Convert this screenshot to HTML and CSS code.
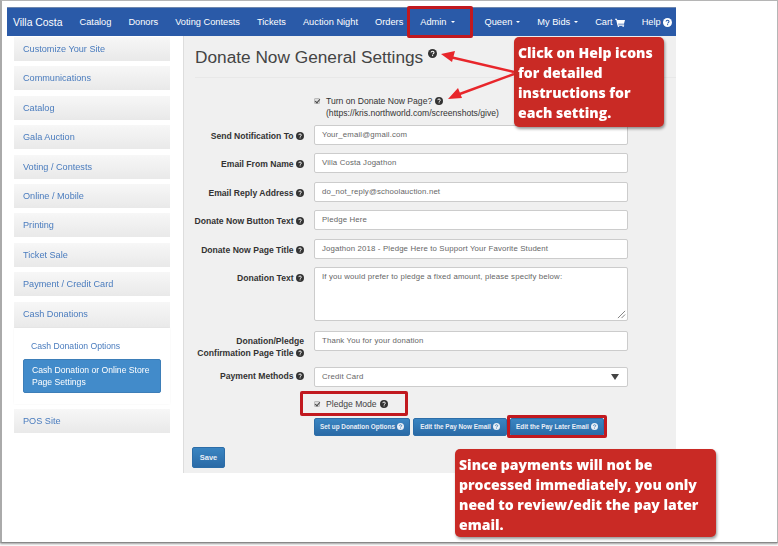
FILE: index.html
```html
<!DOCTYPE html>
<html lang="en">
<head>
<meta charset="utf-8">
<title>Donate Now General Settings</title>
<link rel="stylesheet" href="styles.css">
</head>
<body>
<svg class="defs" width="0" height="0" aria-hidden="true">
  <symbol id="q" viewBox="0 0 16 16">
    <circle cx="8" cy="8" r="8" fill="currentColor"/>
    <path d="M5.4 6.2c.2-1.5 1.3-2.2 2.7-2.2 1.5 0 2.6.9 2.6 2.2 0 1.9-2.4 1.9-2.4 3.5" fill="none" stroke="var(--q,#fff)" stroke-width="1.9"/>
    <rect x="7.2" y="10.8" width="1.9" height="1.9" fill="var(--q,#fff)"/>
  </symbol>
</svg>
<div class="shot">
  <div class="page">
    <nav class="nav">
      <a class="brand">Villa Costa</a>
      <a>Catalog</a><a>Donors</a><a>Voting Contests</a><a>Tickets</a><a>Auction Night</a><a>Orders</a>
      <a class="admin">Admin<i class="caret"></i></a>
      <a>Queen<i class="caret"></i></a>
      <a>My Bids<i class="caret"></i></a>
      <a class="cart">Cart
        <svg class="carticon" viewBox="0 0 16 14"><path d="M0 1h3l.6 2H16l-1.6 6H5l.3 1.3H14.6V12H4L1.9 2.6H0z" fill="#fff"/><circle cx="5.5" cy="13" r="1.2" fill="#fff"/><circle cx="13" cy="13" r="1.2" fill="#fff"/></svg>
      </a>
      <a class="help">Help <svg class="q navq"><use href="#q"/></svg></a>
    </nav>
    <div class="body">
      <aside class="side">
        <div class="item">Customize Your Site</div>
        <div class="item">Communications</div>
        <div class="item">Catalog</div>
        <div class="item">Gala Auction</div>
        <div class="item">Voting / Contests</div>
        <div class="item">Online / Mobile</div>
        <div class="item">Printing</div>
        <div class="item">Ticket Sale</div>
        <div class="item">Payment / Credit Card</div>
        <div class="item open">Cash Donations</div>
        <div class="sub">
          <div class="subitem">Cash Donation Options</div>
          <div class="subitem active">Cash Donation or Online Store Page Settings</div>
        </div>
        <div class="item">POS Site</div>
      </aside>
      <main class="main">
        <h1 class="title">Donate Now General Settings <svg class="q titleq"><use href="#q"/></svg></h1>
        <div class="turnon">
          <span class="check"></span>
          <div>Turn on Donate Now Page? <svg class="q"><use href="#q"/></svg><br>(https://kris.northworld.com/screenshots/give)</div>
        </div>
        <div class="row"><label>Send Notification To <svg class="q"><use href="#q"/></svg></label><div class="field">Your_email@gmail.com</div></div>
        <div class="row"><label>Email From Name <svg class="q"><use href="#q"/></svg></label><div class="field">Villa Costa Jogathon</div></div>
        <div class="row"><label>Email Reply Address <svg class="q"><use href="#q"/></svg></label><div class="field">do_not_reply@schoolauction.net</div></div>
        <div class="row"><label>Donate Now Button Text <svg class="q"><use href="#q"/></svg></label><div class="field">Pledge Here</div></div>
        <div class="row"><label>Donate Now Page Title <svg class="q"><use href="#q"/></svg></label><div class="field">Jogathon 2018 - Pledge Here to Support Your Favorite Student</div></div>
        <div class="row"><label>Donation Text <svg class="q"><use href="#q"/></svg></label><div class="field area">If you would prefer to pledge a fixed amount, please specify below:
          <svg class="grip" viewBox="0 0 10 10"><path d="M9 1 1 9M9 5 5 9" stroke="#777" fill="none"/></svg></div></div>
        <div class="row two"><label>Donation/Pledge<br>Confirmation Page Title <svg class="q"><use href="#q"/></svg></label><div class="field">Thank You for your donation</div></div>
        <div class="row pay"><label>Payment Methods <svg class="q"><use href="#q"/></svg></label><div class="field select">Credit Card<i class="selcaret"></i></div></div>
        <div class="pledge"><span class="check"></span>Pledge Mode <svg class="q"><use href="#q"/></svg></div>
        <div class="btns">
          <span class="btn">Set up Donation Options <svg class="q btnq"><use href="#q"/></svg></span>
          <span class="btn">Edit the Pay Now Email <svg class="q btnq"><use href="#q"/></svg></span>
          <span class="btn">Edit the Pay Later Email <svg class="q btnq"><use href="#q"/></svg></span>
        </div>
        <span class="btn save">Save</span>
      </main>
    </div>
  </div>

  <span class="redbox rb-admin"></span>
  <span class="redbox rb-pledge"></span>
  <span class="redbox rb-later"></span>
  <svg class="arrows" width="778" height="546" viewBox="0 0 778 546">
    <g stroke="#e8262b" stroke-width="2.4" fill="none"><path d="M514 72 450 57"/><path d="M514 74 457 95"/></g>
    <path d="M441 54 455 51 452 62zM448 99 458 88 462 98z" fill="#e8262b"/>
  </svg>
  <div class="callout c1">Click on Help icons<br>for detailed<br>instructions for<br>each setting.</div>
  <div class="callout c2">Since payments will not be<br>processed immediately, you only<br>need to review/edit the pay later<br>email.</div>
</div>
</body>
</html>
```
FILE: styles.css
```css
* { box-sizing: border-box; }
html, body { margin: 0; padding: 0; background: #fff; }
body { font-family: "Liberation Sans", Arial, sans-serif; font-size: 10px; color: #333; }
.defs { position: absolute; }
.shot { position: relative; width: 778px; height: 546px; overflow: hidden; }
.shot::before { content: ""; position: absolute; inset: 0 0 3px 0; border: 1px solid #b5b5b5; border-left: 2px solid #aaa; border-bottom-color: #888; box-shadow: 0 1px 2px rgba(0,0,0,.4); pointer-events: none; }
.page { position: absolute; inset: 7px auto auto 7px; width: 669px; filter: blur(.35px); }

.nav { display: flex; align-items: center; height: 29px; background: #2a5aa8; color: #fff; padding-left: 6px; border-top: 1px solid #6f87ad; white-space: nowrap; }
.nav a { margin-right: 17px; font-size: 9.25px; }
.nav .brand { font-size: 10.4px; }
.nav .admin { margin-right: 30px; }
.nav .cart, .nav .help { display: flex; align-items: center; gap: 2px; }
.nav .help { margin-right: 0; }
.caret { display: inline-block; margin-left: 4px; vertical-align: 2px; border: 2.5px solid transparent; border-top-color: #fff; border-bottom: 0; }
.carticon { width: 10px; height: 9px; }
.q { display: inline-block; width: 8px; height: 8px; color: #333; vertical-align: -1px; }
.navq { color: #fff; --q: #2a5aa8; width: 9px; height: 9px; }
.titleq { width: 9px; height: 9px; vertical-align: 5px; }

.body { display: flex; align-items: flex-start; }
.side { width: 156px; margin-left: 7px; padding-top: 1px; display: flex; flex-direction: column; gap: 5.4px; color: #4a7cbe; }
.item { height: 24px; padding: 0 9px; line-height: 24px; background: linear-gradient(#f7f7f7, #e9e9e9); font-size: 9.15px; }
.item.open { height: 26px; margin-bottom: -5.4px; }
.sub { height: 76px; padding: 12px 9px 0; background: #fff; box-shadow: 0 0 2px rgba(0,0,0,.05); }
.subitem { font-size: 8.65px; padding-left: 8px; line-height: 12px; }
.subitem.active { margin-top: 7px; height: 34px; padding: 4px 2px 4px 8px; line-height: 12px; color: #fff; background: #428bca; border: 1px solid #3d7eb8; border-radius: 2px; }

.main { width: 493px; height: 437px; margin-left: 13px; padding: 0 0 0 1px; background: #f0f0f0; border-left: 1px solid #ddd; position: relative; }
.title { margin: 0 0 0 10px; height: 42px; padding-top: 11px; font-size: 17.25px; line-height: 21px; font-weight: 400; color: #444; border-bottom: 1px solid #e8e8e8; white-space: nowrap; }
.turnon { display: flex; gap: 5px; margin: 17px 0 0 129px; font-size: 8.6px; line-height: 12px; height: 30px; }
.turnon > div { margin-left: 1px; }
.check { display: inline-block; flex: none; position: relative; width: 6px; height: 6px; margin-top: 3px; background: #ddd; border: 1px solid #bbb; border-radius: 1px; }
.check::after { content: ""; position: absolute; left: 1px; top: -1px; width: 2px; height: 4px; border: solid #444; border-width: 0 1px 1px 0; transform: rotate(40deg); }
.row { display: flex; margin-bottom: 8.4px; }
.row label { width: 119px; padding-top: 5px; text-align: right; font-weight: 700; font-size: 8.6px; line-height: 12px; color: #333; flex: none; white-space: nowrap; }
.row.two { height: 20px; }
.row.two label { padding-top: 4px; }
.row.pay label { padding-top: 10px; }
.field { position: relative; width: 314px; height: 20px; margin-left: 10px; padding: 0 7px; line-height: 18px; font-size: 7.8px; letter-spacing: .15px; color: #666; background: #fff; border: 1px solid #ccc; border-radius: 2px; white-space: nowrap; }
.area { height: 54px; padding-top: 1px; line-height: 16px; margin-bottom: 2px; }
.grip { position: absolute; right: 1px; bottom: 1px; width: 9px; height: 9px; }
.select { margin-top: 7px; }
.selcaret { position: absolute; right: 8px; top: 6px; border: 4px solid transparent; border-top: 6px solid #444; border-bottom: 0; }
.pledge { display: flex; align-items: center; gap: 6px; margin: 11px 0 0 129px; height: 12px; font-size: 8.6px; color: #444; }
.pledge .check { margin: 0; }
.pledge .q { margin-left: -3px; }
.btns { display: flex; gap: 3px; margin: 8px 0 0 129px; }
.btn { display: inline-flex; align-items: center; justify-content: center; gap: 2px; width: 96px; height: 18px; font-size: 6.4px; font-weight: 700; color: #e8eef6; background: linear-gradient(#3a85c2, #2a6aa6); border: 1px solid #2c6da8; border-radius: 2px; white-space: nowrap; }
.btn:nth-child(2), .btn:nth-child(3) { width: 94px; }
.btnq { width: 7px; height: 7px; color: #e8eef6; --q: #2f74ad; }
.btn.save { position: absolute; left: 8px; top: 411px; width: 33px; height: 21px; font-size: 7.5px; }

.redbox { position: absolute; border: 3px solid #c1191f; border-radius: 2px; }
.rb-admin { left: 407px; top: 6px; width: 66px; height: 32px; }
.rb-pledge { left: 300px; top: 391px; width: 108px; height: 25px; }
.rb-later { left: 507px; top: 415px; width: 100px; height: 23px; }
.arrows { position: absolute; left: 0; top: 0; }
.callout { position: absolute; padding: 6px 0 0 4px; background: #c92a25; color: #fff; font-family: "Open Sans", sans-serif; font-weight: 800; font-size: 14px; line-height: 20px; border-radius: 5px; box-shadow: 1px 2px 3px rgba(0,0,0,.4); white-space: nowrap; }
.c1 { left: 514px; top: 37px; width: 150px; height: 90px; }
.c2 { left: 455px; top: 449px; width: 261px; height: 88px; }
```
